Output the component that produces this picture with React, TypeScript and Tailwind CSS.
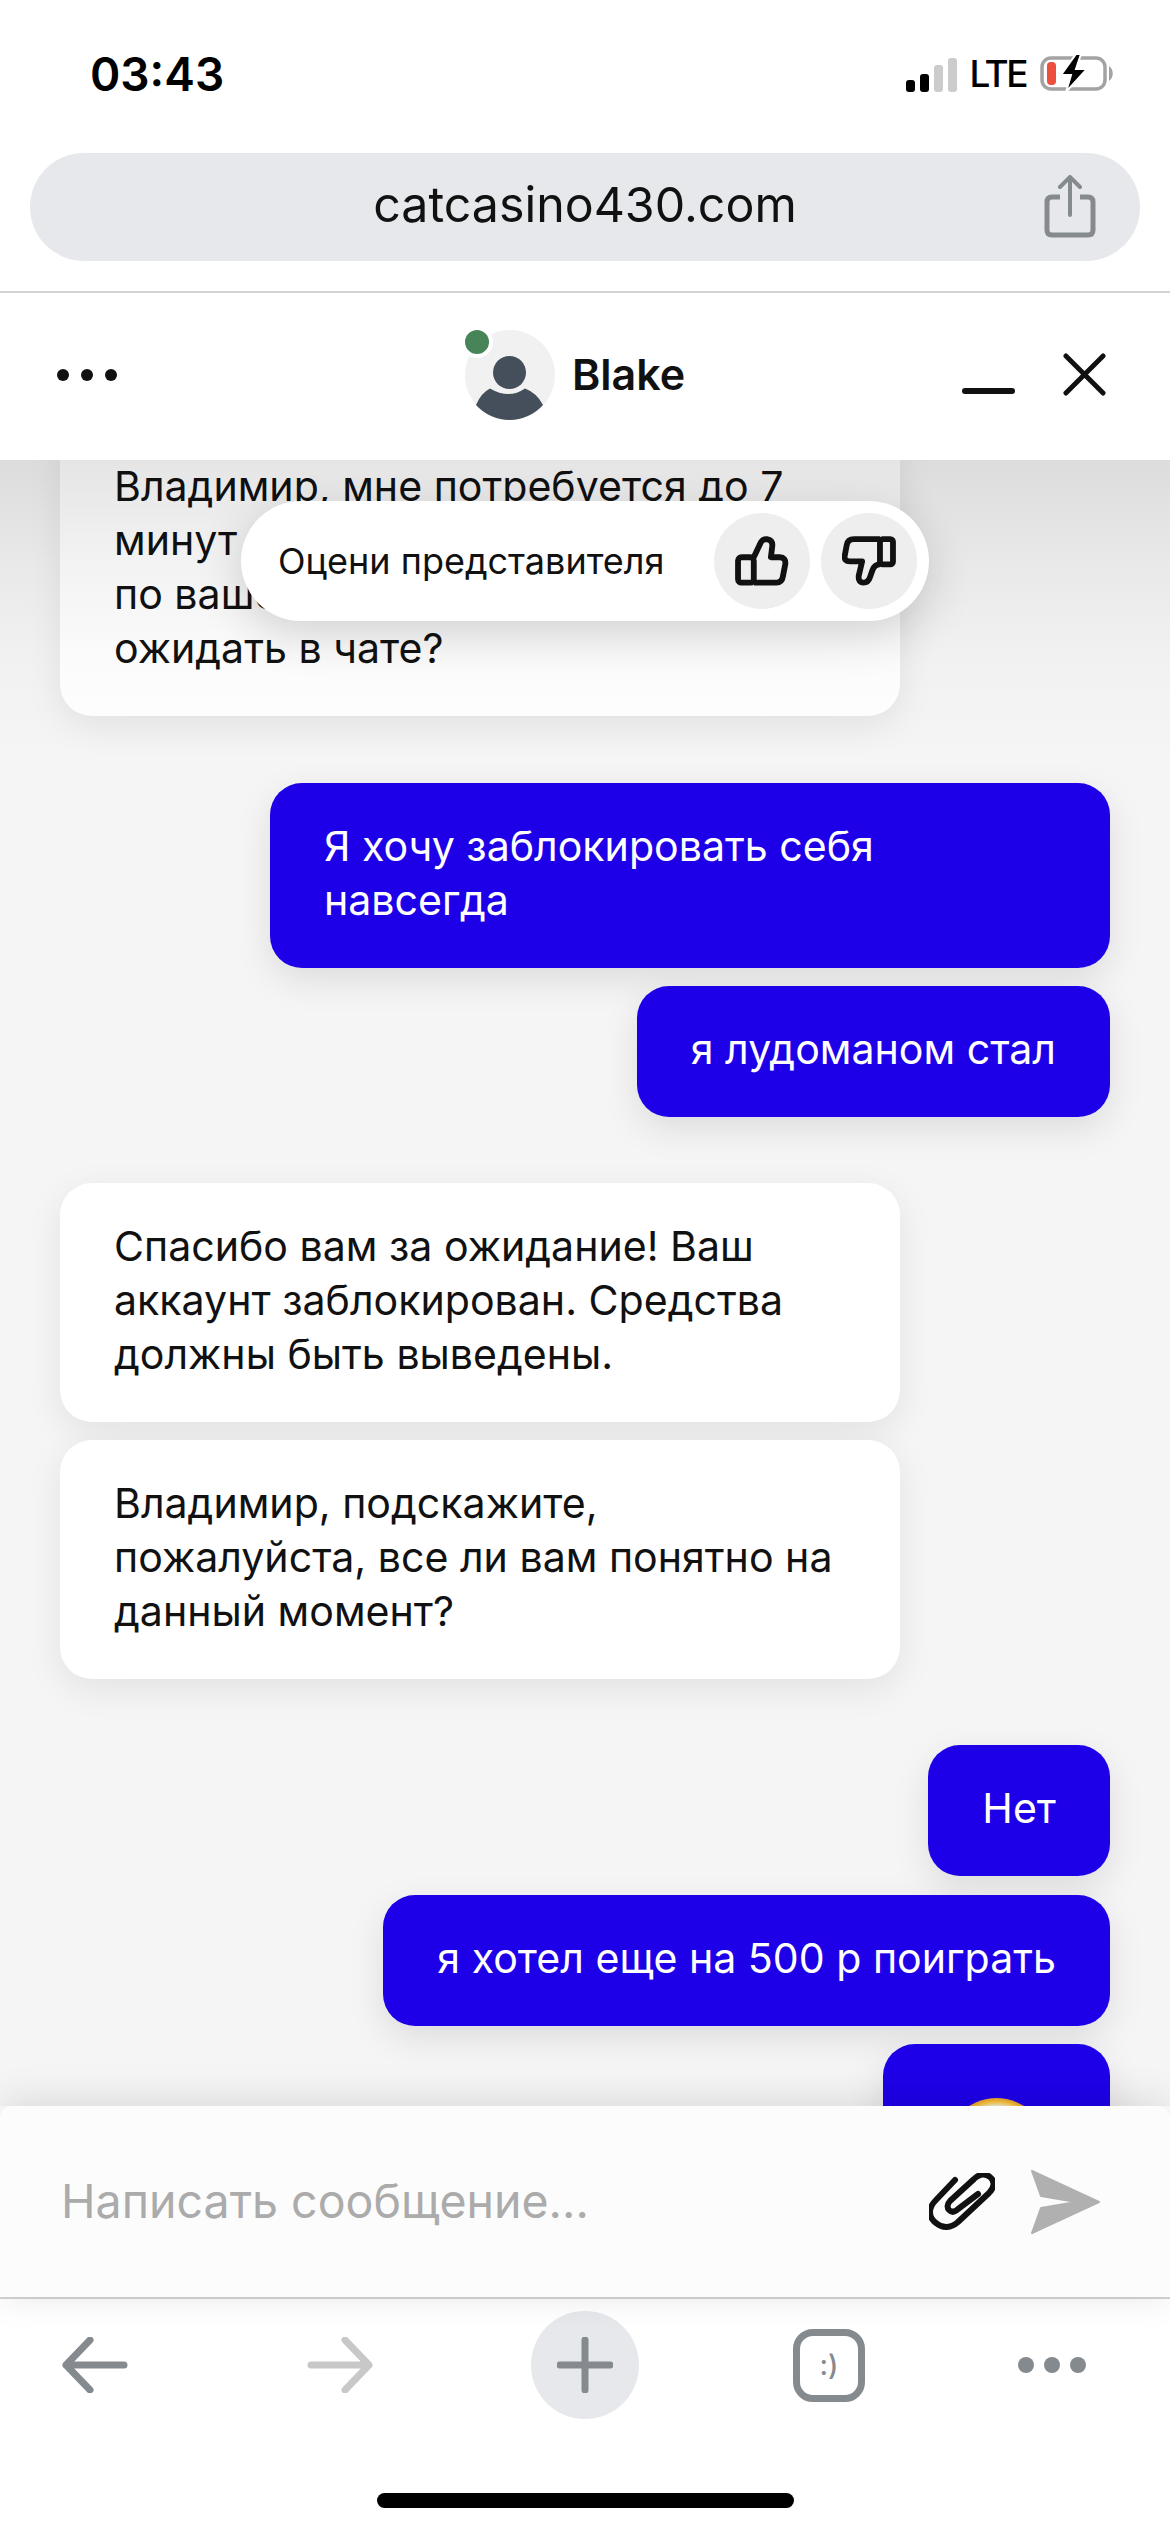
const sent = "self-end rounded-[32px] bg-[#1e00e8] px-[54px] pt-[35.5px] pb-[41.5px] text-white shadow-[0_12px_36px_rgba(0,0,0,0.1)]";
const received = "w-[840px] rounded-[32px] bg-white px-[54px] pt-[35.5px] pb-[41.5px] text-[#111] shadow-[0_10px_36px_rgba(0,0,0,0.08)]";

function StatusBar() {
  return (
    <div className="flex h-[153px] shrink-0 items-start justify-between pl-[90px] pr-[56px] pt-[51px]">
      <span className="text-[46px] leading-[46px] font-semibold text-black">03:43</span>
      <div className="mt-[3px] flex items-end">
        <svg width="52" height="34" viewBox="0 0 52 34" className="mt-[3px]">
          <rect x="0" y="22" width="9" height="12" rx="3" fill="#000" />
          <rect x="14" y="16" width="9" height="18" rx="3" fill="#000" />
          <rect x="28" y="7" width="9" height="27" rx="3" fill="#ccc" />
          <rect x="42" y="0" width="9" height="34" rx="3" fill="#ccc" />
        </svg>
        <span className="ml-[12px] text-[37px] leading-[36px] font-medium tracking-[-2.5px] text-black">LTE</span>
        <svg width="74" height="38" viewBox="0 0 74 38" className="ml-[14px]">
          <rect x="2" y="4" width="63" height="31" rx="9" fill="none" stroke="#a3a3a3" strokeWidth="3.5" />
          <rect x="7" y="8" width="9" height="23" rx="4" fill="#ec4f3e" />
          <path d="M36 0 L21 21 H31 L26 38 L47 15 H36 L41 0 Z" fill="#000" stroke="#fff" strokeWidth="2" />
          <path d="M69 12 C74 15 74 24 69 27 Z" fill="#a3a3a3" />
        </svg>
      </div>
    </div>
  );
}

function UrlBar() {
  return (
    <div className="shrink-0 px-[30px] pb-[30px]">
      <div className="relative flex h-[108px] items-center justify-center rounded-full bg-[#e7e8ec] pb-[3px]">
        <span className="text-[48.3px] leading-none text-[#111]">catcasino430.com</span>
        <svg width="52" height="64" viewBox="0 0 52 64" className="absolute right-[44px] top-[22px]" fill="none" stroke="#858a8f">
          <path d="M16 22 H8 Q3 22 3 27 V55 Q3 60 8 60 H44 Q49 60 49 55 V27 Q49 22 44 22 H36" strokeWidth="5" />
          <path d="M26 40 V3 M16 12 L26 2 L36 12" strokeWidth="4" strokeLinecap="round" />
        </svg>
      </div>
    </div>
  );
}

function ChatHeader() {
  return (
    <div className="relative z-20 flex h-[169px] shrink-0 items-center border-t-2 border-[#d4d4d6] bg-white pb-[4px] pl-[57px] pr-[64px]">
      <div className="flex w-[408px] gap-[12px]">
        <div className="size-[12px] rounded-full bg-[#111]" />
        <div className="size-[12px] rounded-full bg-[#111]" />
        <div className="size-[12px] rounded-full bg-[#111]" />
      </div>
      <svg width="90" height="90" viewBox="0 0 90 90">
        <circle cx="45" cy="45" r="45" fill="#f1f1f1" />
        <circle cx="44.5" cy="42.5" r="16.5" fill="#454f5b" />
        <path d="M11 75 Q16 63 25 58.5 Q44 69.5 60 58.5 Q72 63 78 75 A45 45 0 0 1 11 75 Z" fill="#454f5b" />
      </svg>
      <div className="absolute left-[461px] top-[33px] size-[32px] rounded-full border-4 border-white bg-[#478558]" />
      <span className="ml-[17px] text-[43px] leading-none font-semibold text-[#111]">Blake</span>
      <div className="ml-auto mt-[32px] h-[6px] w-[53px] rounded-full bg-[#111]" />
      <svg width="43" height="43" viewBox="0 0 44 44" className="ml-[48px]" stroke="#111" strokeWidth="5" strokeLinecap="round">
        <path d="M3 3 L41 41 M41 3 L3 41" />
      </svg>
    </div>
  );
}

function RatingPopup() {
  return (
    <div className="absolute left-[241px] top-[41px] z-10 flex h-[120px] w-[688px] items-center rounded-full bg-white pl-[37px] pr-[12px] shadow-[0_12px_48px_rgba(0,0,0,0.16)]">
      <span className="text-[36px] leading-none text-[#111]">Оцени представителя</span>
      <div className="ml-auto flex size-[96px] items-center justify-center rounded-full bg-[#eee]">
        <svg width="54" height="50" viewBox="160 110 156 146" fill="none" stroke="#111" strokeWidth="17" strokeLinejoin="round">
          <rect x="168" y="172" width="46" height="74" rx="10" />
          <path d="M214 172 L232 134 Q238 118 252 119 Q270 122 268 140 L264 172 H290 Q308 173 306 192 L299 228 Q296 246 280 246 H214" />
        </svg>
      </div>
      <div className="ml-[11px] flex size-[96px] items-center justify-center rounded-full bg-[#eee]">
        <svg width="54" height="50" viewBox="490 110 156 146" fill="none" stroke="#111" strokeWidth="17" strokeLinejoin="round">
          <rect x="600" y="119" width="38" height="74" rx="8" />
          <path d="M600 119 H524 Q506 119 503 136 L497 168 Q495 184 512 184 H548 L538 226 Q536 246 552 246 Q566 246 571 230 L578 210 Q584 193 600 193" />
        </svg>
      </div>
    </div>
  );
}

function Messages() {
  return (
    <div className="relative min-h-0 flex-1 overflow-hidden bg-[#f5f5f5]">
      {/* header shadow, falls over the first messages but not the popup */}
      <div className="absolute inset-x-0 top-0 z-[5] h-[300px] bg-[linear-gradient(rgba(0,0,0,0.1),rgba(0,0,0,0.05)_33%,rgba(0,0,0,0.016)_66%,transparent)]" />
      <RatingPopup />
      <div className="-mt-[37px] flex flex-col px-[60px] text-[41.1px] leading-[54px]">
        <div className={received}>
          Владимир, мне потребуется до 7<br />
          минут для проверки информации<br />
          по вашему вопросу. Можете<br />
          ожидать в чате?
        </div>
        <div className={`mt-[67px] w-[840px] ${sent}`}>Я хочу заблокировать себя навсегда</div>
        <div className={`mt-[18px] ${sent}`}>я лудоманом стал</div>
        <div className={`mt-[66px] ${received}`}>Спасибо вам за ожидание! Ваш аккаунт заблокирован. Средства должны быть выведены.</div>
        <div className={`mt-[18px] ${received}`}>Владимир, подскажите, пожалуйста, все ли вам понятно на данный момент?</div>
        <div className={`mt-[66px] ${sent}`}>Нет</div>
        <div className={`mt-[19px] ${sent}`}>я хотел еще на 500 р поиграть</div>
        <div className={`mt-[18px] ${sent}`}>
          <div className="mx-[8px] mt-[18px] size-[103px] rounded-full bg-[radial-gradient(closest-side,#f3f0dc_84%,#f9c23c_93%,#e8a02e_100%)]" />
        </div>
      </div>
    </div>
  );
}

function Composer() {
  return (
    <div className="relative z-20 flex h-[191px] shrink-0 items-center rounded-t-[12px] bg-[#fcfcfc] pl-[61px] pr-[70px] shadow-[0_-4px_40px_rgba(0,0,0,0.12)]">
      <span className="text-[46.5px] leading-none text-[#ababab]">Написать сообщение...</span>
      <svg width="66" height="58" viewBox="928 2174 66 58" className="ml-auto" fill="none" stroke="#111" strokeWidth="6" strokeLinecap="round">
        <path d="M954 2181 L935 2201 C927 2209 927 2218 935 2224 C942 2230 950 2229 957 2223 L988 2194 C994 2188 994 2182 989 2178 C984 2174 978 2175 973 2180 L949 2202 C946 2205 946 2209 948 2211 C951 2214 954 2213 957 2210 L977 2195" />
      </svg>
      <svg width="70" height="64" viewBox="1029 2170 70 64" className="ml-[35px]" fill="#b0b0b0" stroke="#b0b0b0" strokeWidth="2" strokeLinejoin="round">
        <path d="M1031 2171 L1098 2202 L1031 2233 L1040 2208 L1075 2202 L1040 2196 Z" />
      </svg>
    </div>
  );
}

function Toolbar() {
  return (
    <div className="flex h-[235px] shrink-0 flex-col border-t-2 border-[#d4d4d6] bg-white">
      <div className="flex h-[120px] items-center pl-[62px] pt-[12px]">
        <svg width="66" height="56" viewBox="0 0 66 56" fill="none" stroke="#858a8f" strokeWidth="7" strokeLinecap="round" strokeLinejoin="round">
          <path d="M62 28 H4 M28 3 L4 28 L28 53" />
        </svg>
        <svg width="66" height="56" viewBox="0 0 66 56" className="ml-[179px]" fill="none" stroke="#c8c8c8" strokeWidth="7" strokeLinecap="round" strokeLinejoin="round">
          <path d="M4 28 H62 M38 3 L62 28 L38 53" />
        </svg>
        <div className="ml-[158px] flex size-[108px] items-center justify-center rounded-full bg-[#e7e8ec]">
          <svg width="56" height="56" viewBox="0 0 56 56" stroke="#858a8f" strokeWidth="7" strokeLinecap="round">
            <path d="M3 28 H53 M28 3 V53" />
          </svg>
        </div>
        <div className="ml-[154px] flex h-[73px] w-[72px] items-center justify-center rounded-[20px] border-[7px] border-[#858a8f] text-[28px] leading-none font-medium text-[#858a8f]">
          :)
        </div>
        <div className="ml-[153px] flex gap-[10px]">
          <div className="size-[16px] rounded-full bg-[#858a8f]" />
          <div className="size-[16px] rounded-full bg-[#858a8f]" />
          <div className="size-[16px] rounded-full bg-[#858a8f]" />
        </div>
      </div>
      <div className="mt-auto mb-[24px] h-[15px] w-[417px] self-center rounded-full bg-black" />
    </div>
  );
}

export default function App() {
  return (
    <div className="flex h-[2532px] w-[1170px] flex-col overflow-hidden bg-white font-['Inter',sans-serif]">
      <StatusBar />
      <UrlBar />
      <ChatHeader />
      <Messages />
      <Composer />
      <Toolbar />
    </div>
  );
}
